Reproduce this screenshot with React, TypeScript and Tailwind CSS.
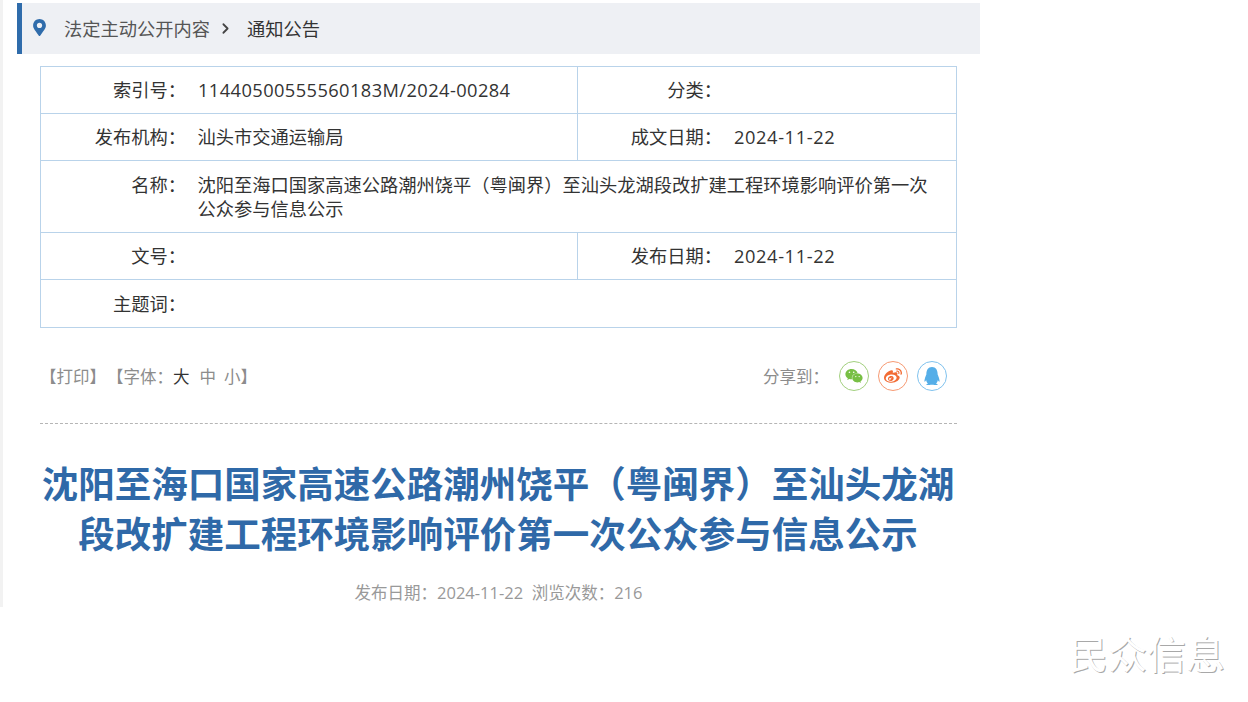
import { ChevronRight } from 'lucide-react';
import { FaMapMarkerAlt, FaQq, FaWeibo, FaWeixin } from 'react-icons/fa';

const FONT = 'font-["Open_Sans","Noto_Sans_CJK_SC",sans-serif]';

function Cell({ label, value, narrow, className = '' }: { label: string; value?: string; narrow?: boolean; className?: string }) {
  return (
    <div className={`flex items-center ${className}`}>
      <div className={`shrink-0 text-right ${narrow ? 'w-[144px]' : 'w-[145px]'}`}>{label}</div>
      <div className={`flex-1 pr-6 leading-[24px] ${narrow ? 'ml-3 tracking-[0.6px]' : 'ml-[11.5px]'}`}>{value}</div>
    </div>
  );
}

export default function App() {
  return (
    <div className={`relative h-[702px] w-[1248px] overflow-hidden bg-white ${FONT}`}>
      <div className="h-[607px] w-[980px] border-l-[3px] border-[#f2f2f2] pt-[3px]">
        {/* Breadcrumb */}
        <div className="ml-[14px] flex h-[51px] items-center border-l-[5px] border-[#2f6cab] bg-[#eef0f4] text-[18.25px]">
          <FaMapMarkerAlt className="ml-[9px] -translate-y-[1px] text-[17px] text-[#2f6cab]" aria-hidden="true" />
          <span className="ml-[16px] text-[#555]">法定主动公开内容</span>
          <ChevronRight className="ml-[7px] h-[17px] w-[17px] text-[#444]" strokeWidth={2.5} />
          <span className="ml-[13px] text-[#333]">通知公告</span>
        </div>

        {/* Info table */}
        <div className="ml-[37px] mt-3 w-[917px] border border-[#b9d3ea] text-[18.25px] text-[#333]">
          <div className="flex h-[46px]">
            <div className="flex w-[537px] items-center border-r border-[#b9d3ea]">
              <div className="w-[145px] shrink-0 text-right">索引号：</div>
              <div className="ml-[12px] tracking-[0.42px]">11440500555560183M/2024-00284</div>
            </div>
            <Cell label="分类：" narrow className="flex-1" />
          </div>
          <div className="flex h-[47px] border-t border-[#b9d3ea]">
            <Cell label="发布机构：" value="汕头市交通运输局" className="w-[537px] border-r border-[#b9d3ea]" />
            <Cell label="成文日期：" value="2024-11-22" narrow className="flex-1" />
          </div>
          <div className="flex h-[72px] items-start border-t border-[#b9d3ea] pt-[12px]">
            <div className="w-[145px] shrink-0 text-right leading-[24px]">名称：</div>
            <div className="ml-[11.5px] flex-1 pr-[24px] leading-[24px]">
              沈阳至海口国家高速公路潮州饶平（粤闽界）至汕头龙湖段改扩建工程环境影响评价第一次公众参与信息公示
            </div>
          </div>
          <div className="flex h-[47px] border-t border-[#b9d3ea]">
            <Cell label="文号：" className="w-[537px] border-r border-[#b9d3ea]" />
            <Cell label="发布日期：" value="2024-11-22" narrow className="flex-1" />
          </div>
          <div className="flex h-[48px] border-t border-[#b9d3ea]">
            <Cell label="主题词：" className="flex-1" />
          </div>
        </div>

        {/* Tools + share */}
        <div className="ml-[37px] flex h-[96px] w-[917px] items-center justify-between border-b border-dashed border-[#b5b5b5] text-[16.5px] text-[#8c8c8c]">
          <div className="flex items-center pt-[3px]">
            <span>【打印】</span>
            <span className="ml-[1px]">【字体：</span>
            <span className="text-[#333]">大</span>
            <span className="ml-[10px]">中</span>
            <span className="ml-[8px]">小</span>
            <span>】</span>
          </div>
          <div className="mr-[10px] flex items-center">
            <span className="pt-[3px]">分享到：</span>
            <span className="ml-[10px] flex h-[30px] w-[30px] items-center justify-center rounded-full border border-[#a3d07f] text-[18px] text-[#78bf45]">
              <FaWeixin />
            </span>
            <span className="ml-[9px] flex h-[30px] w-[30px] items-center justify-center rounded-full border border-[#f79a73] text-[18px] text-[#f26c35]">
              <FaWeibo />
            </span>
            <span className="ml-[9px] flex h-[30px] w-[30px] items-center justify-center rounded-full border border-[#7fc2ee] text-[18px] text-[#55aee8]">
              <FaQq />
            </span>
          </div>
        </div>

        {/* Title */}
        <h1 className="ml-[36.5px] mt-[35px] w-[917px] text-center text-[36.5px] font-bold leading-[50px] text-[#2f69a8]">
          沈阳至海口国家高速公路潮州饶平（粤闽界）至汕头龙湖段改扩建工程环境影响评价第一次公众参与信息公示
        </h1>
        <div className="ml-[37px] mt-[22px] w-[917px] text-center text-[16.5px] text-[#999]">
          发布日期：2024-11-22&nbsp;&nbsp;浏览次数：216
        </div>
      </div>

      {/* Watermark */}
      <div className="absolute left-[1069px] top-[627px] text-[39px] font-normal leading-[54px] text-white [text-shadow:1px_1px_0_#a8a8a8]">
        民众信息
      </div>
    </div>
  );
}
